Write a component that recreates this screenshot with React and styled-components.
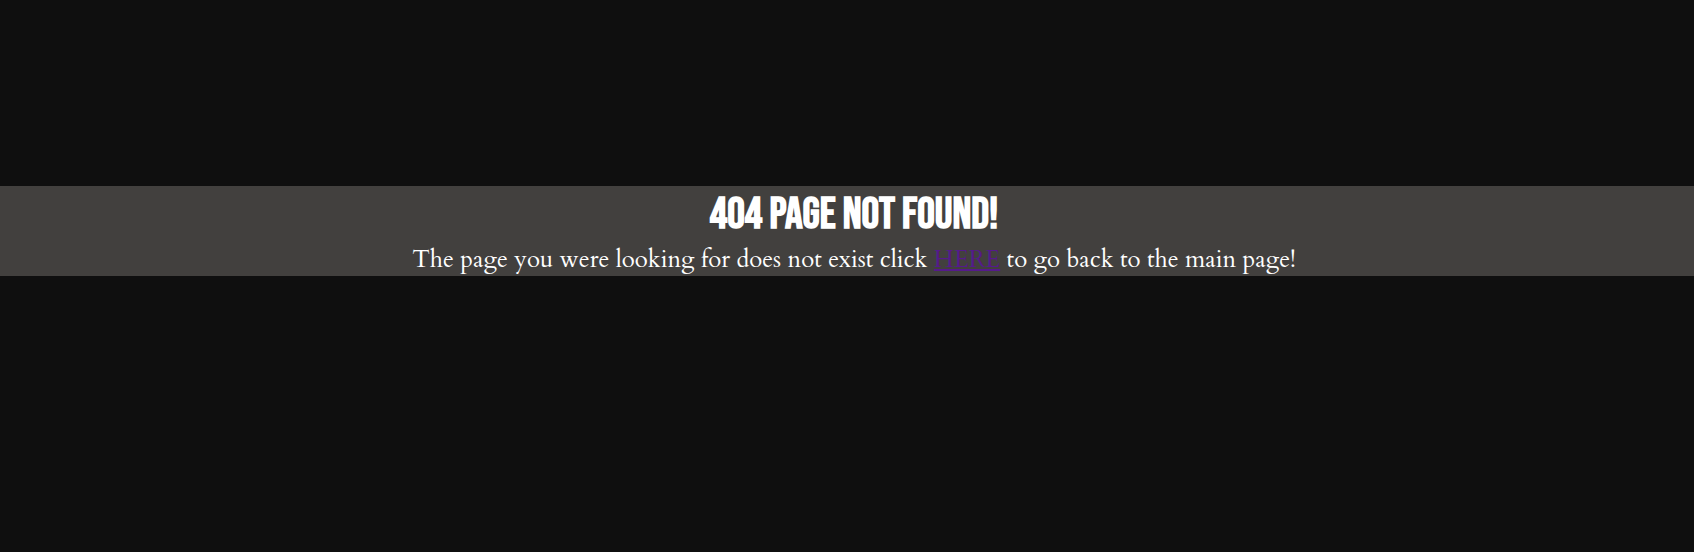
import React from "react";
import styled, { createGlobalStyle } from "styled-components";

const GlobalStyle = createGlobalStyle`
  *, *::before, *::after {
    box-sizing: border-box;
  }
  body {
    margin: 0;
    background: #0f0f0f;
  }
`;

const Page = styled.main`
  min-height: 100vh;
  padding-top: 186px;
  background: #0f0f0f;
`;

const Banner = styled.section`
  padding-left: 14px;
  background: #42403e;
  color: #ffffff;
  text-align: center;
`;

const Title = styled.h1`
  margin: 0;
  font-family: "Bebas Neue", "Liberation Sans Narrow", "Liberation Sans", sans-serif;
  font-size: 44px;
  font-weight: 700;
  line-height: 58px;
`;

const Message = styled.p`
  margin: 0;
  font-family: "Cardo", "EB Garamond", "Liberation Serif", serif;
  font-size: 24px;
  line-height: 32px;
`;

const HomeLink = styled.a`
  color: #551a8b;
  text-decoration: underline;
`;

export default function App() {
  return (
    <>
      <GlobalStyle />
      <Page>
        <Banner>
          <Title>404 PAGE NOT FOUND!</Title>
          <Message>
            The page you were looking for does not exist click{" "}
            <HomeLink href="/">HERE</HomeLink> to go back to the main page!
          </Message>
        </Banner>
      </Page>
    </>
  );
}
